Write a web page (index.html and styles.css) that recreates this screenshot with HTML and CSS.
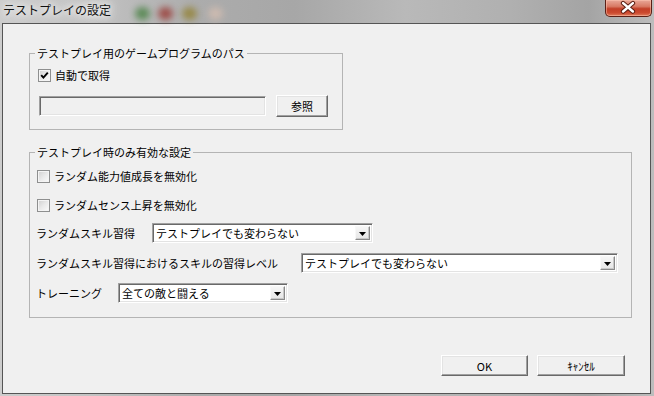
FILE: index.html
```html
<!DOCTYPE html>
<html lang="ja">
<head>
<meta charset="utf-8">
<title>テストプレイの設定</title>
<link rel="stylesheet" href="styles.css">
</head>
<body>
<div class="window">
  <div class="titlebar">
    <span class="title">テストプレイの設定</span>
    <span class="blob blob-green"></span>
    <span class="blob blob-red"></span>
    <span class="blob blob-yellow"></span>
    <span class="blob blob-pale"></span>
    <span class="close">
      <svg width="47" height="17" viewBox="0 0 47 17">
        <path d="M18.5 4 L28.5 12.5 M28.5 4 L18.5 12.5" stroke="#5a1c10" stroke-width="4.6" stroke-linecap="round" fill="none"/>
        <path d="M18.5 4 L28.5 12.5 M28.5 4 L18.5 12.5" stroke="#ffffff" stroke-width="2.6" stroke-linecap="round" fill="none"/>
      </svg>
    </span>
  </div>
  <div class="client">
    <fieldset class="group group-path">
      <legend>テストプレイ用のゲームプログラムのパス</legend>
      <div class="group-body body-path">
        <div class="check-row">
          <span class="cb">
            <svg width="11" height="11" viewBox="0 0 11 11"><path d="M2.2 5.2 L4.4 7.6 L8.8 2.6" stroke="#000" stroke-width="1.9" fill="none"/></svg>
          </span>
          <span class="check-label">自動で取得</span>
        </div>
        <div class="path-row">
          <div class="textbox"></div>
          <div class="btn btn-browse">参照</div>
        </div>
      </div>
    </fieldset>
    <fieldset class="group group-test">
      <legend>テストプレイ時のみ有効な設定</legend>
      <div class="group-body body-test">
        <div class="check-row check-row-test">
          <span class="cb"></span>
          <span class="check-label">ランダム能力値成長を無効化</span>
        </div>
        <div class="check-row check-row-test check-row-second">
          <span class="cb"></span>
          <span class="check-label">ランダムセンス上昇を無効化</span>
        </div>
        <div class="select-row">
          <span class="row-label label-skill">ランダムスキル習得</span>
          <div class="select select-skill">
            <span class="select-text">テストプレイでも変わらない</span>
            <span class="select-arrow"><svg width="7" height="4" viewBox="0 0 7 4"><polygon points="0,0 7,0 3.5,4" fill="#000"/></svg></span>
          </div>
        </div>
        <div class="select-row">
          <span class="row-label label-level">ランダムスキル習得におけるスキルの習得レベル</span>
          <div class="select select-level">
            <span class="select-text">テストプレイでも変わらない</span>
            <span class="select-arrow"><svg width="7" height="4" viewBox="0 0 7 4"><polygon points="0,0 7,0 3.5,4" fill="#000"/></svg></span>
          </div>
        </div>
        <div class="select-row">
          <span class="row-label label-training">トレーニング</span>
          <div class="select select-training">
            <span class="select-text">全ての敵と闘える</span>
            <span class="select-arrow"><svg width="7" height="4" viewBox="0 0 7 4"><polygon points="0,0 7,0 3.5,4" fill="#000"/></svg></span>
          </div>
        </div>
      </div>
    </fieldset>
    <div class="actions">
      <div class="btn btn-ok">OK</div>
      <div class="btn btn-cancel">ｷｬﾝｾﾙ</div>
    </div>
  </div>
</div>
</body>
</html>
```
FILE: styles.css
```css
* { box-sizing: border-box; }
html, body {
  margin: 0;
  padding: 0;
  width: 654px;
  height: 396px;
  overflow: hidden;
}
body {
  background: #a9a9a9;
  font-family: "Noto Sans CJK JP", "Noto Sans", sans-serif;
  font-size: 11px;
  color: #000;
}
.window {
  display: flex;
  flex-direction: column;
  width: 654px;
  height: 396px;
  background: linear-gradient(90deg, #cdcdcd 0, #c3c3c3 14%, #acacac 30%, #a7a7a7 45%, #b9b9b9 62%, #b0b0b0 78%, #a4a4a4 90%, #bdbdbd 100%);
}
.titlebar {
  height: 23px;
  display: flex;
  align-items: flex-start;
  flex: none;
}
.title {
  margin: 2px 0 0 3px;
  font-size: 12px;
  line-height: 15px;
  color: #111;
  text-shadow: 0 0 6px #fff, 0 0 10px #fff, 0 0 14px #eee;
}
.blob {
  width: 15px;
  height: 13px;
  margin-top: 7px;
  border-radius: 50%;
  filter: blur(3.5px);
  opacity: 0.75;
}
.blob-green { margin-left: 24px; background: #3a7a34; }
.blob-red { margin-left: 8px; background: #962a24; }
.blob-yellow { margin-left: 9px; background: #8f7c24; }
.blob-pale { margin-left: 11px; background: #d8c0b2; }
.close {
  margin-left: auto;
  margin-right: 2px;
  width: 47px;
  height: 17px;
  border: 1px solid #5b2016;
  border-top: none;
  border-radius: 0 0 5px 5px;
  background: linear-gradient(180deg, #e9a898 0, #d87a64 40%, #c23f27 55%, #cc4a2f 80%, #e07c5c 100%);
  box-shadow: inset 0 0 0 1px rgba(255, 200, 180, 0.5);
  display: flex;
  align-items: center;
  justify-content: center;
}
.close svg { display: block; margin: -1px 0 0 -1px; }
.client {
  flex: 1;
  margin: 0 3px 2px 2px;
  border: 1px solid #555;
  background: #f0f0f0;
  display: flex;
  flex-direction: column;
  align-items: flex-start;
  padding: 0 25px 0 26px;
}
.group {
  margin: 0;
  padding: 0;
  border: 1px solid #b4b4b4;
  min-width: 0;
}
.group legend {
  padding: 0 2px;
  margin-left: 5px;
  line-height: 14px;
  height: 14px;
}
.group-path {
  margin-top: 22px;
  width: 314px;
}
.group-test {
  margin-top: 15px;
  width: 603px;
}
.body-path {
  padding: 7px 0 12px 8px;
}
.body-test {
  padding: 9px 0 14px 6px;
}
.check-row {
  display: flex;
  align-items: center;
  height: 16px;
}
.check-row-test { margin-left: 1px; }
.check-row-second { margin-top: 13px; }
.cb {
  width: 13px;
  height: 13px;
  border: 1px solid #8e8f8f;
  background: linear-gradient(135deg, #cfcfcf 0, #e9e9e9 50%, #fbfbfb 100%);
  box-shadow: inset 0 0 0 1px #f4f4f4;
  display: flex;
  align-items: center;
  justify-content: center;
  flex: none;
}
.cb svg { display: block; }
.check-label {
  margin-left: 4px;
  line-height: 16px;
  white-space: nowrap;
}
.path-row {
  display: flex;
  align-items: center;
  margin-top: 12px;
  height: 22px;
}
.textbox {
  width: 227px;
  height: 20px;
  margin-left: 1px;
  background: #f0f0f0;
  border: 1px solid;
  border-color: #a0a0a0 #fff #fff #a0a0a0;
  box-shadow: inset 1px 1px #696969, inset -1px -1px #e3e3e3;
}
.btn {
  display: flex;
  align-items: center;
  justify-content: center;
  background: #f0f0f0;
  border: 1px solid;
  border-color: #fff #696969 #696969 #fff;
  box-shadow: inset -1px -1px #a0a0a0, inset 1px 1px #e3e3e3;
  line-height: 14px;
  white-space: nowrap;
}
.btn-browse {
  margin-left: 10px;
  width: 52px;
  height: 22px;
}
.select-row {
  display: flex;
  align-items: center;
  height: 20px;
  margin-top: 10px;
}
.row-label {
  white-space: nowrap;
  line-height: 16px;
  flex: none;
}
.label-skill { width: 116px; }
.label-level { width: 265px; }
.label-training { width: 82px; }
.select {
  height: 20px;
  display: flex;
  align-items: center;
  background: #fff;
  border: 1px solid;
  border-color: #a0a0a0 #fff #fff #a0a0a0;
  box-shadow: inset 1px 1px #696969, inset -1px -1px #e3e3e3;
  padding: 0 2px 0 2px;
}
.select-skill { width: 221px; }
.select-level { width: 317px; }
.select-training { width: 170px; }
.select-text {
  flex: 1;
  padding-left: 1px;
  line-height: 16px;
  white-space: nowrap;
  overflow: hidden;
}
.select-arrow {
  width: 15px;
  height: 14px;
  flex: none;
  display: flex;
  align-items: center;
  justify-content: center;
  background: linear-gradient(180deg, #f6f6f6 0, #e6e6e6 100%);
  border: 1px solid;
  border-color: #f8f8f8 #8a8a8a #8a8a8a #f8f8f8;
  box-shadow: inset -1px -1px #c8c8c8;
}
.select-arrow svg { display: block; margin-top: 1px; }
.actions {
  align-self: stretch;
  display: flex;
  justify-content: flex-end;
  gap: 9px;
  margin-top: 37px;
}
.btn-ok {
  width: 87px;
  height: 21px;
}
.btn-cancel {
  width: 88px;
  height: 21px;
}
```
